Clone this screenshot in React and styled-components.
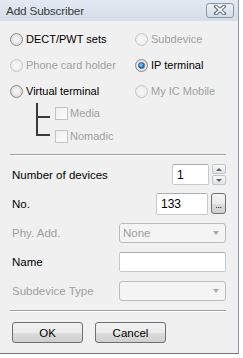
import React from "react";
import styled, { createGlobalStyle } from "styled-components";

const GlobalStyle = createGlobalStyle`
  html, body {
    margin: 0;
    padding: 0;
    background: #ffffff;
  }
  body {
    font-family: "Liberation Sans", Arial, sans-serif;
    font-size: 11px;
  }
`;

const Window = styled.div`
  width: 238px;
  height: 353px;
  background: #f0f0f0;
  border-right: 1px solid #8e97a3;
  border-bottom: 1px solid #6f7680;
  display: flex;
  flex-direction: column;
  box-sizing: content-box;
`;

const TitleBar = styled.div`
  height: 21px;
  flex: none;
  display: flex;
  align-items: center;
  justify-content: space-between;
  padding: 0 4px 0 6px;
  background: linear-gradient(#e2e9f2, #d4dee9);
`;

const Title = styled.span`
  font-size: 11.8px;
  color: #3c3c3c;
  letter-spacing: -0.2px;
  margin-top: 1px;
`;

const CloseButton = styled.div`
  width: 26px;
  height: 13px;
  border: 1px solid #8a98aa;
  border-radius: 3px;
  background: linear-gradient(#eef2f7, #d3dce7);
  display: flex;
  align-items: center;
  justify-content: center;
  margin-top: -1px;
`;

const Body = styled.div`
  flex: 1;
  display: flex;
  flex-direction: column;
  padding: 5px 12px 0 10px;
`;

const RadioGrid = styled.div`
  display: grid;
  grid-template-columns: 125px 1fr;
  grid-auto-rows: 26px;
`;

const Option = styled.div`
  display: flex;
  align-items: center;
  gap: 3px;
  color: ${(p) => (p.disabled ? "#a0a0a0" : "#000")};
  white-space: nowrap;
`;

const RadioCircle = styled.span`
  width: 11px;
  height: 11px;
  border-radius: 50%;
  border: 1px solid ${(p) => (p.disabled ? "#c6c6c6" : "#8a8a8a")};
  background: ${(p) =>
    p.disabled
      ? "radial-gradient(circle at 50% 50%, #f4f4f4 30%, #e4e4e4 100%)"
      : "radial-gradient(circle at 50% 50%, #f3f3f3 20%, #d2d2d2 100%)"};
  display: flex;
  align-items: center;
  justify-content: center;
  flex: none;

  &::after {
    content: "";
    display: ${(p) => (p.checked ? "block" : "none")};
    width: 5px;
    height: 5px;
    border-radius: 50%;
    background: radial-gradient(circle at 40% 35%, #8fd0ff, #1f6fc0 70%, #0d4d92);
    border: 1px solid #245a94;
  }
`;

const Tree = styled.div`
  display: flex;
  margin-top: -2px;
`;

const TreeLines = styled.svg`
  width: 45px;
  height: 45px;
  flex: none;
`;

const TreeItems = styled.div`
  display: flex;
  flex-direction: column;
  gap: 1px;
`;

const TreeItem = styled.div`
  height: 22px;
  display: flex;
  align-items: center;
  gap: 2px;
  color: #a0a0a0;
`;

const CheckBox = styled.span`
  width: 11px;
  height: 11px;
  border: 1px solid #c2c2c2;
  background: linear-gradient(135deg, #f0f0f0, #fbfbfb);
  flex: none;
`;

const Separator = styled.div`
  height: 0;
  border-top: 1px solid #a0a0a0;
  border-bottom: 1px solid #ffffff;
  margin: ${(p) => p.margin || "0"};
`;

const Fields = styled.div`
  display: flex;
  flex-direction: column;
  gap: 8px;
  padding-left: 2px;
`;

const FieldRow = styled.div`
  height: 21px;
  display: flex;
  align-items: center;
  gap: 3px;
`;

const Label = styled.span`
  flex: 1;
  color: ${(p) => (p.disabled ? "#a0a0a0" : "#000")};
  font-size: 11.5px;
`;

const TextBox = styled.div`
  width: ${(p) => p.width}px;
  height: ${(p) => p.height || 21}px;
  box-sizing: border-box;
  background: #fff;
  border: 1px solid #c5cad0;
  border-top-color: #abadb3;
  border-radius: 2px;
  display: flex;
  align-items: center;
  padding-left: 4px;
  font-size: 12px;
  color: #000;
`;

const Spinner = styled.div`
  width: 14px;
  height: 21px;
  display: flex;
  flex-direction: column;
  gap: 1px;
`;

const SpinButton = styled.div`
  flex: 1;
  box-sizing: border-box;
  border: 1px solid #c2c6cc;
  border-radius: 2px;
  background: linear-gradient(#f8f8f8, #e3e3e3);
  display: flex;
  align-items: center;
  justify-content: center;

  &::after {
    content: "";
    width: 0;
    height: 0;
    border-left: 3px solid transparent;
    border-right: 3px solid transparent;
    ${(p) =>
      p.up ? "border-bottom: 3px solid #5a6470;" : "border-top: 3px solid #5a6470;"}
  }
`;

const DotsButton = styled.div`
  width: 15px;
  height: 21px;
  box-sizing: border-box;
  border: 1px solid #707070;
  border-radius: 3px;
  background: linear-gradient(#f4f4f4 0%, #ebebeb 50%, #dcdcdc 51%, #cfcfcf 100%);
  display: flex;
  align-items: flex-end;
  justify-content: center;
  padding-bottom: 5px;
  font-size: 9px;
  line-height: 6px;
  letter-spacing: -0.5px;
  color: #000;
`;

const Select = styled.div`
  width: 107px;
  height: 20px;
  box-sizing: border-box;
  border: 1px solid #bcbcbc;
  border-radius: 3px;
  background: #f4f4f4;
  display: flex;
  align-items: center;
  padding: 0 6px 0 3px;
  color: #9c9c9c;
  font-size: 11.5px;

  &::after {
    content: "";
    margin-left: auto;
    width: 0;
    height: 0;
    border-left: 3.5px solid transparent;
    border-right: 3.5px solid transparent;
    border-top: 4px solid #a8a8a8;
  }
`;

const ButtonRow = styled.div`
  display: flex;
  gap: 12px;
  padding-left: 2px;
`;

const Button = styled.div`
  width: 71px;
  height: 21px;
  box-sizing: border-box;
  border: 1px solid #707070;
  border-radius: 3px;
  background: linear-gradient(#f2f2f2 0%, #ebebeb 50%, #dddddd 51%, #cfcfcf 100%);
  display: flex;
  align-items: center;
  justify-content: center;
  font-size: 11.5px;
  color: #000;
`;

const Radio = ({ label, checked, disabled }) => (
  <Option disabled={disabled}>
    <RadioCircle checked={checked} disabled={disabled} />
    {label}
  </Option>
);

export default function App() {
  return (
    <>
      <GlobalStyle />
      <Window>
        <TitleBar>
          <Title>Add Subscriber</Title>
          <CloseButton>
            <svg width="12" height="10" viewBox="0 0 12 10">
              <path d="M2 1.5 L10 8.5 M10 1.5 L2 8.5" stroke="#4b5868" strokeWidth="3.6" strokeLinecap="square" />
              <path d="M2 1.5 L10 8.5 M10 1.5 L2 8.5" stroke="#ffffff" strokeWidth="1.8" strokeLinecap="square" />
            </svg>
          </CloseButton>
        </TitleBar>
        <Body>
          <RadioGrid>
            <Radio label="DECT/PWT sets" />
            <Radio label="Subdevice" disabled />
            <Radio label="Phone card holder" disabled />
            <Radio label="IP terminal" checked />
            <Radio label="Virtual terminal" />
            <Radio label="My IC Mobile" disabled />
          </RadioGrid>
          <Tree>
            <TreeLines viewBox="0 0 45 45">
              <path d="M27 1 V34 M27 15 H40 M27 33 H40" stroke="#3a3a3a" strokeWidth="2" fill="none" />
            </TreeLines>
            <TreeItems>
              <TreeItem>
                <CheckBox />
                Media
              </TreeItem>
              <TreeItem>
                <CheckBox />
                Nomadic
              </TreeItem>
            </TreeItems>
          </Tree>
          <Separator margin="7px 0 8px 0" />
          <Fields>
            <FieldRow>
              <Label>Number of devices</Label>
              <TextBox width={37}>1</TextBox>
              <Spinner>
                <SpinButton up />
                <SpinButton />
              </Spinner>
            </FieldRow>
            <FieldRow>
              <Label>No.</Label>
              <TextBox width={52} height={22}>133</TextBox>
              <DotsButton>...</DotsButton>
            </FieldRow>
            <FieldRow>
              <Label disabled>Phy. Add.</Label>
              <Select>None</Select>
            </FieldRow>
            <FieldRow>
              <Label>Name</Label>
              <TextBox width={107} height={20} />
            </FieldRow>
            <FieldRow>
              <Label disabled>Subdevice Type</Label>
              <Select />
            </FieldRow>
          </Fields>
          <Separator margin="9px 0 10px 0" />
          <ButtonRow>
            <Button>OK</Button>
            <Button>Cancel</Button>
          </ButtonRow>
        </Body>
      </Window>
    </>
  );
}
